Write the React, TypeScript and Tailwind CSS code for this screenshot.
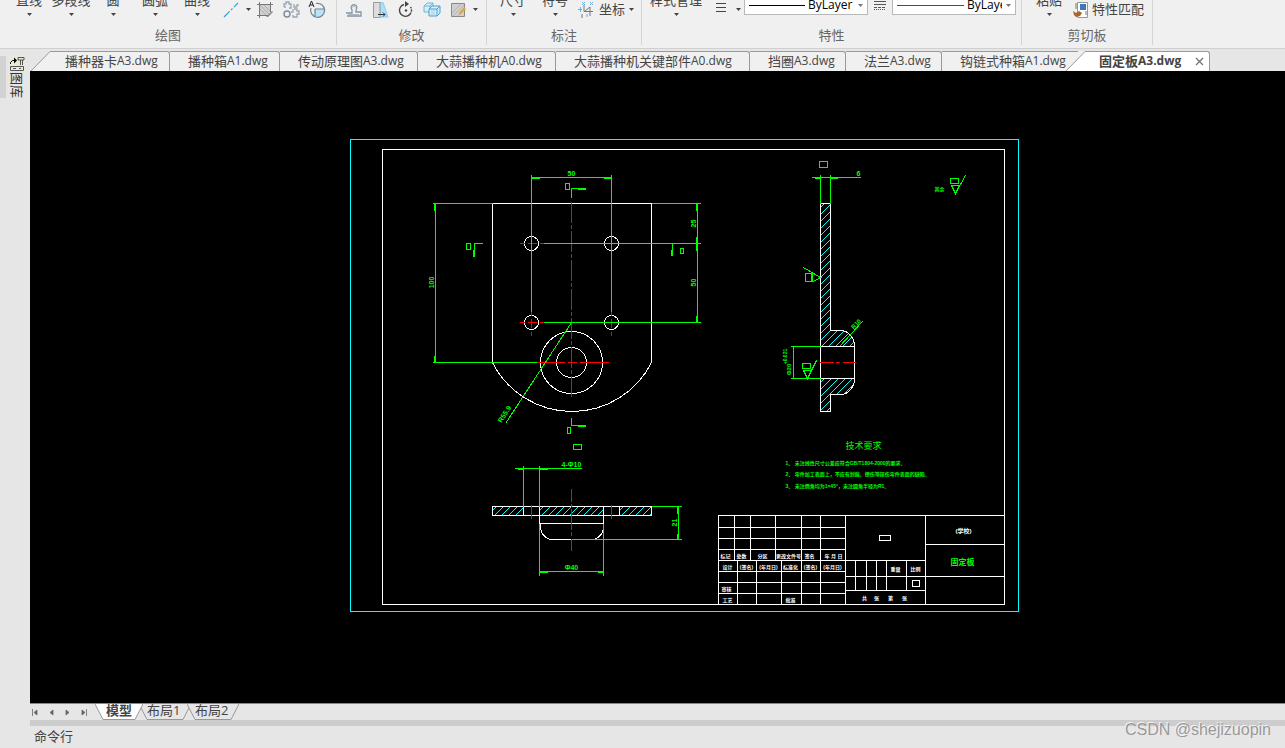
import type { ReactNode } from "react";

const FONT = "font-['Open_Sans','Noto_Sans_CJK_SC',sans-serif]";

const GREEN = "#00ff00";
const CYAN = "#00ffff";
const RED = "#ff0000";

type Doc = { name: string; sheet: string; width: string };

const DOCS: Doc[] = [
  { name: "播种器卡", sheet: "A3.dwg", width: "min-w-[119px]" },
  { name: "播种箱", sheet: "A1.dwg", width: "min-w-[110px]" },
  { name: "传动原理图", sheet: "A3.dwg", width: "min-w-[138px]" },
  { name: "大蒜播种机", sheet: "A0.dwg", width: "min-w-[138px]" },
  { name: "大蒜播种机关键部件", sheet: "A0.dwg", width: "min-w-[194px]" },
  { name: "挡圈", sheet: "A3.dwg", width: "min-w-[96px]" },
  { name: "法兰", sheet: "A3.dwg", width: "min-w-[96px]" },
  { name: "钩链式种箱", sheet: "A1.dwg", width: "min-w-[124px]" },
];

function Caret({ light = false }: { light?: boolean }) {
  return (
    <svg
      width="5"
      height="3"
      viewBox="0 0 5 3"
      className={`shrink-0 ${light ? "text-[#777]" : "text-[#444]"}`}
      aria-hidden="true"
    >
      <path d="M0 0H5L2.5 3Z" fill="currentColor" />
    </svg>
  );
}

function BigButton({ label, wide = false }: { label: string; wide?: boolean }) {
  return (
    <button type="button" className={`flex shrink-0 flex-col items-center gap-[5px] pb-[9px] ${wide ? "w-16" : "w-[42px]"}`}>
      <span className="whitespace-nowrap leading-4">{label}</span>
      <Caret />
    </button>
  );
}

function IconButton({ title, children }: { title: string; children: ReactNode }) {
  return (
    <button type="button" aria-label={title} className="mb-[5px] flex h-5 w-[26px] shrink-0 items-center justify-center">
      <svg width="18" height="18" viewBox="0 0 18 18" fill="none">
        {children}
      </svg>
    </button>
  );
}

function CaretButton({ title }: { title: string }) {
  return (
    <button type="button" aria-label={title} className="mb-[6px] flex h-5 w-2 shrink-0 items-center justify-center">
      <Caret />
    </button>
  );
}

function Group({ title, className, children }: { title: string; className: string; children: ReactNode }) {
  return (
    <section className="flex shrink-0 flex-col justify-end pb-[3px]">
      <div className="flex flex-col justify-end border-r border-[#d4d4d4]">
        <div className={`flex items-end ${className}`}>{children}</div>
        <h2 className="text-center leading-5 text-[#666]">{title}</h2>
      </div>
    </section>
  );
}

function LayerSelect({ label, color, width }: { label: string; color: string; width: string }) {
  return (
    <div className="mb-[10px] flex h-5 w-[124px] shrink-0 items-center border border-[#b8b8b8] bg-white px-1">
      <svg height="1" className="min-w-0 flex-1" aria-hidden="true">
        <rect width="100%" height="1" fill={color} />
      </svg>
      <select aria-label={label} className={`${width} mr-1 appearance-none bg-transparent pl-[3px] text-xs text-black outline-none`}>
        <option>ByLayer</option>
      </select>
      <Caret light />
    </div>
  );
}

function Ribbon() {
  return (
    <header className="flex h-[49px] shrink-0 overflow-hidden border-b border-[#d0d0d0] bg-[#f0f0f0]">
      <Group title="绘图" className="pr-[6px] pl-2">
        <BigButton label="直线" />
        <BigButton label="多段线" />
        <BigButton label="圆" />
        <BigButton label="圆弧" />
        <BigButton label="曲线" />
        <IconButton title="构造线">
          <path d="M2 16L16 2" stroke="#35a7df" strokeWidth="1.3" strokeDasharray="8 2 2 2" />
        </IconButton>
        <CaretButton title="更多线型" />
        <IconButton title="图案填充">
          <rect x="3.5" y="3.5" width="11" height="11" fill="#cfcfcf" />
          <path d="M3 7L10 14M3 3L14 14M7 3L14 10" stroke="#b0b0b0" />
          <path d="M1 3.5H17M1 14.5H12M3.5 1V17M14.5 1V11" stroke="#777" />
          <path d="M16 10L17 11L12 16H10Z" fill="#888" />
        </IconButton>
        <IconButton title="零件">
          <path
            d="M2 6V3H4V1H7V3H9V7H7M2 6H4M12 3V6H15V4H17M11 8V11H9M12 8H15V10H17V13H15V16H11V14"
            stroke="#9aa6b4"
            strokeWidth="1.3"
          />
          <circle cx="5" cy="13" r="3" stroke="#7c8b9e" strokeWidth="1.4" />
        </IconButton>
        <IconButton title="局部放大">
          <path d="M7 8H16.500A7 7 0 0 1 7 16Z" fill="#b9e3fa" />
          <path d="M8 2.500A7 7 0 1 1 3 7M7 8H16M7 8V16" stroke="#75838d" strokeWidth="1.2" />
          <path d="M1 6L3.500 0L6 6M2 4H5" stroke="#222" />
        </IconButton>
      </Group>

      <Group title="修改" className="pr-[7px] pl-1">
        <IconButton title="偏移">
          <path d="M1 12H7V9C3 2 15 2 11 9V11H16V15H2" stroke="#8492a2" strokeWidth="1.3" />
          <path d="M3 13.500H14M7 7C7 5 11 5 11 7" stroke="#aeb8c4" />
        </IconButton>
        <IconButton title="拉伸">
          <path d="M9 1.500H12L17 16H9Z" fill="#aee0fa" stroke="#8ccbed" />
          <path d="M2.500 1.500H9V16.500H2.500Z" fill="#ddd" stroke="#999" />
          <path d="M7 13.500H14M12 11.500L14 13.500L12 15.500" stroke="#333" />
        </IconButton>
        <IconButton title="旋转">
          <path d="M7 3.500A6 6 0 1 0 13.500 6" stroke="#444" strokeWidth="1.4" strokeDasharray="24 1 2 1 2 1" />
          <path d="M8 0L12 3L8 6Z" fill="#444" />
          <circle cx="9" cy="9.500" r="1.200" fill="#444" />
        </IconButton>
        <IconButton title="复制">
          <path d="M1 5L4 2H10V7M1 5H7V11H1ZM7 5L10 2" fill="#d4effc" stroke="#6db4df" />
          <path d="M6 8L9 5H17V12L14 15H6ZM6 8H14V15M14 8L17 5" fill="#d4effc" stroke="#519dca" />
          <path d="M9 9V14M11 9V14" stroke="#a3cfe8" />
        </IconButton>
        <IconButton title="编辑填充">
          <path d="M2.500 2.500H15.500V15.500H2.500Z" fill="#cfcfcf" stroke="#888" />
          <path d="M3 12L12 3M4 15L15 4M9 15L15 9" stroke="#b5b5b5" />
          <path d="M15 6L17 8L12 13L9.500 14L10.500 11Z" fill="#e7a33c" />
        </IconButton>
        <CaretButton title="更多修改" />
      </Group>

      <Group title="标注" className="pr-[7px] pl-[5px]">
        <BigButton label="尺寸" />
        <BigButton label="符号" />
        <button type="button" className="mb-[6px] flex h-5 shrink-0 items-center">
          <svg width="20" height="18" viewBox="0 0 20 18" fill="none" className="mr-[3px]">
            <path d="M8 5V11.500H17M9 11L14 7V16M6 14V18" stroke="#777" />
            <path d="M2 9.500H6M4.500 7V12M6 2L9 5M9 2L6 5M14 2L17 5M17 2L14 5M11 14V17" stroke="#6ab2e0" />
          </svg>
          <span className="mr-1 leading-5">坐标</span>
          <Caret />
        </button>
      </Group>

      <Group title="特性" className="pr-[5px] pl-[2px]">
        <BigButton label="样式管理" wide />
        <IconButton title="线宽">
          <path d="M4 2.5H14M4 6.5H14M4 10.5H14" stroke="#444" />
        </IconButton>
        <CaretButton title="线宽列表" />
        <div className="w-[2px]" />
        <LayerSelect label="线型" color="#000000" width="w-[49px]" />
        <svg width="24" height="20" viewBox="0 0 24 20" className="mb-[10px] shrink-0" aria-hidden="true">
          <path d="M6 6.5H18M6 9.5H18" stroke="#555" />
          <path d="M6 12.5H18" stroke="#555" strokeDasharray="3 1" />
          <path d="M6 14.5H18" stroke="#555" strokeDasharray="1 1" />
        </svg>
        <LayerSelect label="颜色" color="#ff0000" width="w-[38px]" />
      </Group>

      <Group title="剪切板" className="pr-2 pl-[6px]">
        <BigButton label="粘贴" />
        <button type="button" className="mb-[6px] flex h-5 shrink-0 items-center pl-[2px]">
          <svg width="18" height="18" viewBox="0 0 18 18" className="mr-[2px]">
            <path d="M5.500 2.500H15.500V17.500H5.500Z" fill="#fff" stroke="#999" />
            <path d="M8 4H14V10H8Z" fill="#3d7cb6" />
            <path d="M4 3V9M13 12H15M13 14H15" stroke="#777" />
            <path d="M1 11L4 13L7 11L10 13L8 16L4 17L2 15Z" fill="#a8642f" />
          </svg>
          <span className="leading-5">特性匹配</span>
        </button>
      </Group>
    </header>
  );
}

function DocTabs() {
  return (
    <nav className="flex h-[22px] shrink-0 items-end overflow-hidden leading-[18px] text-[#444]">
      <svg width="21" height="20" viewBox="0 0 21 20" className="shrink-0" aria-hidden="true">
        <path d="M1 20L20 .5H21V20Z" fill="#f0f0f0" />
        <path d="M1 20L20 .5H21" fill="none" stroke="#999" />
      </svg>
      {DOCS.map((doc, i) => (
        <button
          key={doc.name}
          type="button"
          className={`flex h-5 shrink-0 items-start border-t border-[#999] bg-[#f0f0f0] whitespace-nowrap ${doc.width} ${
            i === 0 ? "pl-[14px]" : "pl-[18px]"
          } ${i === DOCS.length - 1 ? "" : "rounded-tr-[3px] border-r"}`}
        >
          {doc.name}
          <span className="text-xs leading-[18px]">{doc.sheet}</span>
        </button>
      ))}
      <svg width="19" height="20" viewBox="0 0 19 20" className="shrink-0" aria-hidden="true">
        <path d="M0 0H19V20H0Z" fill="#f0f0f0" />
        <path d="M0 20L19 .5V20Z" fill="#fff" />
        <path d="M0 .5H12M0 20L19 .5" fill="none" stroke="#999" />
      </svg>
      <div className="flex h-5 shrink-0 items-start rounded-tr-[3px] border-t border-r border-[#999] bg-white pr-[5px] pl-[14px] font-bold">
        <button type="button" className="flex items-start whitespace-nowrap">
          固定板<span className="text-xs leading-[18px]">A3.dwg</span>
        </button>
        <button type="button" aria-label="关闭" className="mt-[5px] ml-[14px]">
          <svg width="9" height="9" viewBox="0 0 9 9">
            <path d="M1 1L8 8M8 1L1 8" stroke="#777" strokeWidth="1.4" />
          </svg>
        </button>
      </div>
    </nav>
  );
}

type LabelProps = { x: number; y: number; size?: number; angle?: number; color?: string; start?: boolean; children: ReactNode };

function Label({ x, y, size = 7, angle = 0, color = GREEN, start = false, children }: LabelProps) {
  return (
    <text
      x={x}
      y={y}
      fontSize={size}
      fontWeight={size < 9 ? 700 : 400}
      fill={color}
      stroke="none"
      textAnchor={start ? "start" : "middle"}
      transform={angle ? `rotate(${angle} ${x} ${y})` : undefined}
    >
      {children}
    </text>
  );
}

type HatchProps = { id: string; outline: string; left: number; top: number; right: number; bottom: number };

// 45° section lining, clipped to the outline
function Hatch({ id, outline, left, top, right, bottom }: HatchProps) {
  const h = bottom - top;
  const count = Math.ceil((right - left + h) / 7);
  return (
    <g>
      <clipPath id={id}>
        <path d={outline} />
      </clipPath>
      <g clipPath={`url(#${id})`} stroke={CYAN}>
        {Array.from({ length: count }, (_, i) => (
          <path key={i} d={`M${left - h + 4 + i * 7} ${bottom}l${h} ${-h}`} />
        ))}
      </g>
    </g>
  );
}

function FrontView() {
  return (
    <g>
      <path d="M492 362V203H651V362A89 89 0 0 1 492 362" stroke="#fff" />
      <g stroke="#fff">
        <circle cx="531" cy="243" r="7" />
        <circle cx="611" cy="243" r="7" />
        <circle cx="531" cy="322" r="7" />
        <circle cx="611" cy="322" r="7" />
        <circle cx="571" cy="362" r="31" />
        <circle cx="571" cy="362" r="15" />
      </g>
      <g stroke={RED}>
        <path d="M571 201V398" strokeDasharray="21 2 4 2" />
        <path d="M519 243H524M527 243H536M539 243H543M519 322H524M527 322H536M539 322H543" />
        <path d="M531 311V315M531 318V327M531 331V335M611 311V315M611 318V327M611 331V335" />
        <path d="M536 362H564M567 362H576M579 362H608" />
      </g>
      <g stroke={GREEN}>
        <path d="M531 311V174M611 311V174M531 177H611" />
        <path d="M432 203H492M435 203V362M432 362H536" />
        <path d="M651 203H700M543 243H700M543 322H700M697 203V322" />
        <path d="M531 178H539M603 178H611M434 203V210M434 355V362M696 203V210M696 236V250M696 315V322" />
        <path d="M571 322L505 423" />
        <path d="M571 197V188H585M577 189H585M565 183H569V189H565Z" />
        <path d="M482 243H474V256M473 249V256M466 243H470V249H466Z" />
        <path d="M672 243V255M671 249V255M680 248H683V253H680Z" />
        <path d="M571 417V425H585M577 426H585M567 427H570V433H567Z" />
      </g>
      <Label x={571} y={175}>50</Label>
      <Label x={433} y={282} angle={-90}>100</Label>
      <Label x={695} y={223} angle={-90}>25</Label>
      <Label x={695} y={282} angle={-90}>50</Label>
      <Label x={506} y={415} angle={-57}>R55.9</Label>
    </g>
  );
}

function SideView() {
  const upper = "M820 203H830V330H841A14 16 0 0 1 854 346H820Z";
  const lower = "M820 378H854A14 16 0 0 1 841 394H830V411H820Z";
  return (
    <g>
      <Hatch id="upper" outline={upper} left={820} top={203} right={854} bottom={346} />
      <Hatch id="lower" outline={lower} left={820} top={378} right={854} bottom={411} />
      <path d={upper} stroke="#fff" />
      <path d={lower} stroke="#fff" />
      <path d="M820 346V378M854 346V378" stroke="#fff" />
      <path d="M819 362H833M835 362H839M842 362H855" stroke={RED} />
      <g stroke={GREEN}>
        <path d="M819 161H827V167H819Z" />
        <path d="M811 177H860M814 178H820M830 178H837M820 174V203M830 174V203" />
        <path d="M805 273H812V281H805ZM811 273V281M813 273L820 277L813 281M803 267L820 277" />
        <path d="M790 346H820M790 378H820M793 346V378" />
        <path d="M802 363H810V368H802ZM803 370H811L807 378L803 370M807 378L816 360" />
        <path d="M839 346L862 321" />
        <path d="M950 178H958V183H950ZM951 185H959L955 193L951 185M955 193L965 175" />
      </g>
      <Label x={858} y={175}>6</Label>
      <Label x={857} y={325} angle={-45} size={6}>R10</Label>
      <Label x={790} y={369} angle={-90} size={6}>Φ20</Label>
      <Label x={786} y={356} angle={-90} size={5}>+0.021</Label>
      <Label x={939} y={190} size={5}>其余</Label>
    </g>
  );
}

function BottomView() {
  return (
    <g>
      <Hatch id="plate-left" outline="M492 506H523V515H492Z" left={492} top={506} right={523} bottom={515} />
      <Hatch id="plate-mid" outline="M539 506H603V515H539Z" left={539} top={506} right={603} bottom={515} />
      <Hatch id="plate-right" outline="M619 506H651V515H619Z" left={619} top={506} right={651} bottom={515} />
      <path d="M492 506H651V515H492ZM523 506V515M539 506V523H603V506M619 506V515" stroke="#fff" />
      <path d="M540 523V526A12 13 0 0 0 551 539H591A12 13 0 0 0 603 526" stroke="#fff" />
      <path d="M571 488V501M571 503V506M571 508V529M571 531V535M571 538V550M531 504V518M611 504V518" stroke={RED} />
      <g stroke={GREEN}>
        <path d="M573 444H581V449H573Z" />
        <path d="M514 468H581M517 469H523M539 469H547M523 465V506M539 465V506" />
        <path d="M539 523V575M603 523V575M539 571H603M539 572H547M597 572H603" />
        <path d="M651 506H681M571 539H681M678 506V539M677 506V513M677 533V539" />
      </g>
      <Label x={571} y={466}>4-Φ10</Label>
      <Label x={571} y={569}>Φ40</Label>
      <Label x={676} y={522} angle={-90}>21</Label>
    </g>
  );
}

const CELLS: [number, number, string][] = [
  [725, 557, "标记"],
  [741, 557, "处数"],
  [762, 557, "分区"],
  [788, 557, "更改文件号"],
  [809, 557, "签名"],
  [833, 557, "年 月 日"],
  [727, 568, "设计"],
  [746, 568, "(签名)"],
  [768, 568, "(年月日)"],
  [790, 568, "标准化"],
  [810, 568, "(签名)"],
  [832, 568, "(年月日)"],
  [726, 590, "审核"],
  [727, 601, "工艺"],
  [790, 601, "批准"],
  [895, 570, "重量"],
  [915, 570, "比例"],
  [864, 599, "共"],
  [876, 599, "张"],
  [890, 599, "第"],
  [904, 599, "张"],
];

function TitleBlock() {
  return (
    <g>
      <g stroke="#fff">
        <path d="M718 604V515H1004M845 515V604M925 515V604" />
        <path d="M718 527H845M718 538H845M718 549H845M718 560H925M718 571H845M718 582H845M718 593H845" />
        <path d="M734 515V560M750 515V560M775 515V560M801 515V604M820 515V604" />
        <path d="M737 560V604M756 560V604M781 560V604" />
        <path d="M845 576H925M845 590H925M855 560V590M866 560V590M876 560V590M886 560V590M906 560V590" />
        <path d="M925 544H1004M925 576H1004" />
        <path d="M879 535H890V540H879ZM912 580H919V586H912Z" />
      </g>
      {CELLS.map(([x, y, text]) => (
        <Label key={`${x}-${y}`} x={x} y={y} size={5} color="#fff">
          {text}
        </Label>
      ))}
      <Label x={963} y={532} size={6} color="#fff">(学校)</Label>
      <Label x={962} y={564} size={8}>固定板</Label>
    </g>
  );
}

function Drawing() {
  return (
    <main className="min-h-0 flex-1 bg-black">
      <svg
        viewBox="30 71 1255 632"
        className="h-full w-full font-['Liberation_Sans','Noto_Sans_CJK_SC',sans-serif]"
        fill="none"
        shapeRendering="crispEdges"
      >
        <g transform="translate(.5 .5)">
          <path d="M350 139H1018V611H350Z" stroke={CYAN} />
          <path d="M382 149H1004V604H382Z" stroke="#fff" />
          <FrontView />
          <SideView />
          <BottomView />
          <TitleBlock />
          <Label x={863} y={448} size={9}>技术要求</Label>
          <Label x={785} y={464} size={5} start>1、 未注线性尺寸公差应符合GB/T1804-2000的要求。</Label>
          <Label x={785} y={475} size={5} start>2、 零件加工表面上，不应有划痕、擦伤等损伤零件表面的缺陷。</Label>
          <Label x={785} y={487} size={5} start>3、 未注倒角均为1×45°，未注圆角半径为R1。</Label>
        </g>
      </svg>
    </main>
  );
}

function LayoutTab({ name, active = false }: { name: string; active?: boolean }) {
  const fill = active ? "#ffffff" : "#e6e6e6";
  return (
    <button type="button" className={`flex h-4 shrink-0 ${active ? "relative z-10 font-bold" : "-ml-1"}`}>
      <svg width="8" height="16" viewBox="0 0 8 16" aria-hidden="true">
        <path d="M0 0L8 15.5V0Z" fill={fill} />
        <path d="M0 0L8 15.5" stroke="#999" />
      </svg>
      <span
        className={`h-4 border-b border-[#999] leading-3 whitespace-nowrap ${
          active ? "w-8 bg-white text-center" : "w-9 bg-[#e6e6e6] text-left"
        }`}
      >
        {name}
      </span>
      <svg width="8" height="16" viewBox="0 0 8 16" aria-hidden="true">
        <path d="M0 15.5L8 0H0Z" fill={fill} />
        <path d="M0 15.5L8 0" stroke="#999" />
      </svg>
    </button>
  );
}

const STEPS = [
  { title: "第一个", d: "M2.5 1V8M7 2V7L4 4.5Z" },
  { title: "上一个", d: "M7 2V7L4 4.5Z" },
  { title: "下一个", d: "M4 2V7L7 4.5Z" },
  { title: "最后一个", d: "M8.5 1V8M4 2V7L7 4.5Z" },
];

function LayoutBar() {
  return (
    <nav className="flex h-[17px] shrink-0 border-t border-[#888] pr-2 text-[#444]">
      <div className="flex w-[65px] items-center">
        {STEPS.map((step) => (
          <button key={step.title} type="button" aria-label={step.title} className="flex w-4 justify-start">
            <svg width="12" height="9" viewBox="0 0 12 9">
              <path d={step.d} fill="#666" stroke="#666" strokeWidth=".8" />
            </svg>
          </button>
        ))}
      </div>
      <LayoutTab name="模型" active />
      <LayoutTab name="布局1" />
      <LayoutTab name="布局2" />
    </nav>
  );
}

function SidePanel() {
  return (
    <aside className="flex w-[30px] shrink-0 items-start pt-[7px]">
      <div className="h-[42px] w-[6px] bg-[#d2d2d2]" />
      <button type="button" className="ml-[3px] flex flex-col items-center text-[#333]">
        <svg width="16" height="16" viewBox="0 0 16 16" fill="none" className="bg-[#e9ead8]">
          <path d="M1.500 8V6.500L3.500 4.500H6" stroke="#000" />
          <path d="M5 1.500L8 4.500L5 7.500Z" fill="#000" />
          <path d="M9 1.500H15V4H9ZM11.500 4V9M13.500 4V9" stroke="#555" />
          <path d="M1.500 10.500H14.500V14.500H1.500ZM4 12.500H7M10 12.500H12" stroke="#555" />
        </svg>
        <span className="leading-4 [text-orientation:sideways] [writing-mode:vertical-rl]">图库</span>
      </button>
    </aside>
  );
}

export default function App() {
  return (
    <div className={`relative flex h-screen flex-col overflow-hidden bg-[#e6e6e6] text-[13px] text-[#444] ${FONT}`}>
      <Ribbon />
      <div className="flex min-h-0 flex-1">
        <SidePanel />
        <div className="flex min-w-0 flex-1 flex-col">
          <DocTabs />
          <Drawing />
          <LayoutBar />
          <div className="h-[6px] shrink-0 bg-[#ccc]" />
          <div className="flex h-[22px] shrink-0 items-center pl-1">
            <label htmlFor="command">命令行</label>
            <input id="command" type="text" className="min-w-0 flex-1 bg-transparent px-2 outline-none" />
          </div>
        </div>
      </div>
      <div className="pointer-events-none absolute right-[14px] bottom-2 font-['Liberation_Sans',sans-serif] text-base leading-5 text-[#999] [text-shadow:-1px_-1px_0_#f4f4f4]">
        CSDN @shejizuopin
      </div>
    </div>
  );
}
